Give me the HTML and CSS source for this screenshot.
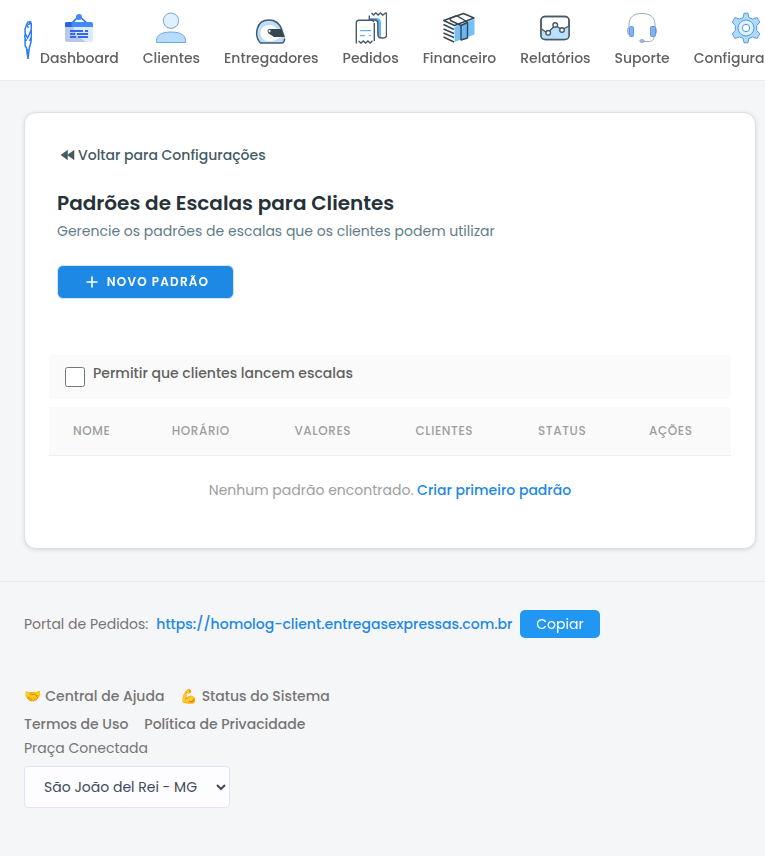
FILE: index.html
```html
<!DOCTYPE html>
<html lang="pt-BR">
<head>
    <meta charset="UTF-8">
    <meta name="viewport" content="width=device-width, initial-scale=1.0">
    <title>Padrões de Escalas para Clientes</title>
    <link rel="stylesheet" href="styles.css">
</head>
<body>
    <header class="topbar">
        <svg class="logo" viewBox="0 0 8 40" fill="none" stroke="#2f7bf6" stroke-width="1.500">
            <path d="M4.500 1.500L6.500 2 5 4 7.300 3.500V17L5.500 21M4 1.500L2.500 5 1 9l.2 5-.6 3L2.500 21M7 10l-2 5-1.500 3L1.500 14M1 19l.2 7 1.300 2 1.500 11 1.300-11L7 22l.3-5"/>
            <path d="M3 5l1.500 3M3.500 29v6"/>
        </svg>
        <nav class="menu">
            <a class="menu-item" href="#">
                <svg class="icon" viewBox="0 0 32 32">
                    <path d="M9 11l6-6h2l7 6" fill="none" stroke="#2962e8" stroke-width="1.600"/>
                    <circle cx="16" cy="5" r="3" fill="#3d8bfd"/>
                    <path d="M2 13h28v15a2 2 0 0 1-2 2H4a2 2 0 0 1-2-2z" fill="#e0eaff"/>
                    <path d="M2 13h8c1 7 5 12 13 17H4a2 2 0 0 1-2-2z" fill="#b8c8e6"/>
                    <path d="M4 10h24a2 2 0 0 1 2 2v3H2v-3a2 2 0 0 1 2-2z" fill="#3d8bfd"/>
                    <path d="M4 10h5l-.5 2 .5 3H2v-3a2 2 0 0 1 2-2z" fill="#2962e8"/>
                    <path d="M7 19h13M22 19h3M7 22h5M14 22h11M7 25h6M15 25h10" fill="none" stroke="#2f6bf0" stroke-width="2"/>
                </svg>
                <span>Dashboard</span>
            </a>
            <a class="menu-item" href="#">
                <svg class="icon" viewBox="0 0 32 32" stroke="#72a5d8" stroke-width="1">
                    <circle cx="16" cy="8.700" r="7.700" fill="#dff0fe"/>
                    <path d="M1.500 30.500v-2C1.500 23 7 20 16 20s14.500 3 14.500 8.500v2z" fill="#b6dcfe"/>
                </svg>
                <span>Clientes</span>
            </a>
            <a class="menu-item" href="#">
                <svg class="icon" viewBox="0 0 32 32">
                    <path d="M5 31C-1 23 1 8 14 8c8 0 12 4 14 10l2 8c0 3-1 5-3 5z" fill="#bbdefb"/>
                    <path d="M9 28C3 22 5 13 14 13c7 0 9 5 10 9l3 3c-5 3-13 6-18 3z" fill="#fff"/>
                    <path d="M5.500 31C-1 24 .5 8 14 8c7 0 10.500 4 12.500 9M5.500 31H26c2.500 0 3.500-1.500 3.500-4" fill="none" stroke="#455a64" stroke-width="1.500" stroke-linecap="round"/>
                    <path d="M15 17h12l3 8H19l-6-4c0-2 0-4 2-4z" fill="#37474f"/>
                    <circle cx="14.500" cy="19" r="1.600" fill="#fff" stroke="#455a64"/>
                </svg>
                <span>Entregadores</span>
            </a>
            <a class="menu-item" href="#">
                <svg class="icon" viewBox="0 0 32 32" fill="none" stroke="#455a64" stroke-width="1.400">
                    <path d="M15 6h6c4 0 5 2 5 6v13c-2 0-3-1-3-3V12c0-3-1-4-3-4h-5z" fill="#64b5f6" stroke="none"/>
                    <path d="M14.300 8V3.500M14.300 8H20c2 0 2.800 1 2.800 3.500V22c0 3 1 4 3.700 4h1.500c2.500 0 3.500-1 3.500-3V.5"/>
                    <path d="M16.500 1l2 2 2.300-2 2.300 2 2.300-2 2.300 2L31 .7"/>
                    <path d="M1.300 31.500V11c0-2 1-2.800 2.700-2.800h13.500L19 10M19.300 11v18"/>
                    <path d="M3.500 29l2.500 2 2.300-2 2.300 2 2.300-2 2.300 2 2.300-2.300"/>
                    <path d="M5 18.700h11M5 23.700h5M14 23.700h2" stroke="#64b5f6" stroke-width="1.300"/>
                </svg>
                <span>Pedidos</span>
            </a>
            <a class="menu-item" href="#">
                <svg class="icon" viewBox="0 0 32 32" fill="none" stroke="#37474f" stroke-width="1.400" stroke-linejoin="round">
                    <path d="M11.500 15L31.500 7v15.500l-20 7.500z" fill="#74c0fb" stroke="none"/>
                    <path d="M.7 8.500L20.500 1.500 31 6 11.500 13.500z" fill="#fff"/>
                    <path d="M18 13.500L7.500 8.500 7 6.300l6.500-2.600M13.500 3.700L24.500 10"/>
                    <path d="M18 13.500v14.500l6.500-2V10.500z" fill="#69b8f5"/>
                    <path d="M.5 12.500l10.500 5M.5 17l10.500 4.500M.5 21l10.500 4.500M.5 25l10.500 5"/>
                </svg>
                <span>Financeiro</span>
            </a>
            <a class="menu-item" href="#">
                <svg class="icon" viewBox="0 0 32 32" stroke="#455a64" stroke-width="1.400">
                    <rect x="2" y="4.500" width="28" height="23" rx="4" fill="#fff"/>
                    <path d="M2.500 17l6 4 8-8 6 5 7.500-4v10c0 2-2 3.500-4 3.500H6.500c-2 0-4-1.500-4-3.500z" fill="#bbe0fe" stroke="none"/>
                    <path d="M2.500 17l6 4 8-8 6 5 7.500-4" fill="none"/>
                    <rect x="2" y="4.500" width="28" height="23" rx="4" fill="none"/>
                    <g fill="#fff"><circle cx="9.200" cy="20.800" r="2.300"/><circle cx="16.200" cy="13" r="2.300"/><circle cx="23" cy="18" r="2.300"/></g>
                </svg>
                <span>Relatórios</span>
            </a>
            <a class="menu-item" href="#">
                <svg class="icon" viewBox="0 0 32 32" fill="none" stroke="#98a9be" stroke-width="1">
                    <path d="M3 15v-2C3 5 8 1.500 16 1.500S29 5 29 13v2M28 24c0 4-2 5.500-6 5.500h-5"/>
                    <path d="M3 15c-2 1-2 7 0 8M29 15c2 1 2 7 0 8" fill="#b6c9e0"/>
                    <rect x="3.500" y="14.500" width="4" height="10" rx="1" fill="#82b1f5" stroke="#6797dc"/>
                    <rect x="24.500" y="14.500" width="5" height="10" rx="1" fill="#82b1f5" stroke="#6797dc"/>
                    <ellipse cx="16" cy="29" rx="2.200" ry="1.500" fill="#a9bdd8"/>
                </svg>
                <span>Suporte</span>
            </a>
            <a class="menu-item" href="#">
                <svg class="icon" viewBox="0 0 32 32" stroke="#529be0" stroke-width="1" stroke-linejoin="round">
                    <path d="M14 1.200h4l.8 4.300 3.700 1.600 4.500-1.600 2.700 4.600-3 3.400v5l3 3.400-2.700 4.600-4.500-1.600-3.700 1.600-.8 4.300h-4l-.8-4.300-3.700-1.600L5 26.500l-2.700-4.600 3-3.400v-5l-3-3.400L5 5.500l4.500 1.600 3.700-1.600z" fill="#b0dbff"/>
                    <circle cx="16" cy="16" r="8" fill="#dff0fe"/>
                    <circle cx="16" cy="16" r="3.700" fill="#fff"/>
                </svg>
                <span>Configurações</span>
            </a>
        </nav>
    </header>

    <main class="card">
        <a class="back" href="#">
            <svg class="back-icon" viewBox="0 0 14 10"><path d="M7 0v10L0 5zM14 0v10L7 5z" fill="#455a64" stroke="#455a64" stroke-width=".6" stroke-linejoin="round"/></svg>
            <span>Voltar para Configurações</span>
        </a>
        <h1>Padrões de Escalas para Clientes</h1>
        <p class="subtitle">Gerencie os padrões de escalas que os clientes podem utilizar</p>
        <button class="btn-new">
            <svg class="plus" viewBox="0 0 12 12"><path d="M6 .5v11M.5 6h11" stroke="#fff" stroke-width="1.600"/></svg>
            <span>NOVO PADRÃO</span>
        </button>

        <label class="permission">
            <input type="checkbox">
            <span>Permitir que clientes lancem escalas</span>
        </label>

        <!-- Tabela de padrões -->
        <div class="table-head">
            <span>NOME</span>
            <span>HORÁRIO</span>
            <span>VALORES</span>
            <span>CLIENTES</span>
            <span>STATUS</span>
            <span>AÇÕES</span>
        </div>
        <p class="empty">Nenhum padrão encontrado. <a href="#">Criar primeiro padrão</a></p>
    </main>

    <footer class="footer">
        <div class="portal">
            <span>Portal de Pedidos:</span>
            <a class="portal-link" href="#">https://homolog-client.entregasexpressas.com.br</a>
            <button class="btn-copy">Copiar</button>
        </div>
        <div class="links">
            <a href="#"><span class="emoji">🤝</span>Central de Ajuda</a>
            <a href="#"><span class="emoji">💪</span>Status do Sistema</a>
        </div>
        <div class="links">
            <a href="#">Termos de Uso</a>
            <a href="#">Política de Privacidade</a>
        </div>
        <label class="praca-label" for="praca">Praça Conectada</label>
        <select id="praca" class="praca">
            <option>São João del Rei - MG</option>
        </select>
    </footer>
</body>
</html>
```

FILE: styles.css
```css
* {
    box-sizing: border-box;
}
body {
    margin: 0;
    height: 856px;
    overflow: hidden;
    background-color: #f5f6f8;
    font-family: Poppins, Inter, sans-serif;
    font-size: 14px;
    line-height: 20px;
    color: #757575;
}
a {
    color: inherit;
    text-decoration: none;
}
button, select {
    font-family: inherit;
    font-size: 14px;
}
/* Top menu */
.topbar {
    display: flex;
    height: 81px;
    padding-left: 24px;
    background-color: #fff;
    border-bottom: 1px solid #e9ebee;
    overflow: hidden;
}
.logo {
    flex: none;
    width: 8px;
    height: 40px;
    margin: 20px 8px 0 0;
}
.menu {
    display: flex;
    gap: 24px;
    padding-top: 12px;
    will-change: transform;
}
.menu-item {
    display: flex;
    flex: none;
    flex-direction: column;
    align-items: center;
    gap: 4px;
    font-weight: 500;
    color: #616161;
    white-space: nowrap;
}
.icon {
    width: 32px;
    height: 32px;
}
/* Card */
.card {
    width: 732px;
    height: 437px;
    margin: 31px 0 0 24px;
    padding: 32px 24px 0;
    background-color: #fff;
    border: 1px solid #dcdfe4;
    border-radius: 12px;
    box-shadow: 0 1px 4px rgba(0, 0, 0, 0.12);
}
.back {
    display: flex;
    align-items: center;
    gap: 4px;
    padding-left: 12px;
    font-weight: 500;
    color: #455a64;
}
.back-icon {
    width: 13px;
    height: 10px;
    overflow: visible;
}
h1 {
    margin: 24px 0 0 8px;
    font-size: 20px;
    line-height: 28px;
    font-weight: 600;
    color: #263238;
}
.subtitle {
    margin: 4px 0 0 8px;
    color: #607d8b;
}
.btn-new {
    display: flex;
    align-items: center;
    justify-content: center;
    gap: 9px;
    width: 177px;
    height: 34px;
    margin: 24px 0 0 8px;
    padding: 0 0 0 4px;
    font-size: 12px;
    font-weight: 600;
    letter-spacing: 1.200px;
    color: #fff;
    background-color: #1e88e5;
    border: 1px solid #d3e5f6;
    border-radius: 6px;
    will-change: transform;
}
.plus {
    width: 12px;
    height: 12px;
}
.permission {
    display: flex;
    gap: 8px;
    height: 44px;
    margin-top: 56px;
    padding: 8px 16px;
    font-weight: 500;
    color: #616161;
    background-color: #fafafa;
    border-radius: 4px;
}
.permission input {
    width: 20px;
    height: 20px;
    margin: 4px 0 0;
}
.table-head {
    display: grid;
    grid-template-columns: 98.700px 122.700px 121px 122.600px 111px 1fr;
    height: 49px;
    margin-top: 8px;
    padding-left: 24px;
    font-size: 12px;
    line-height: 48px;
    font-weight: 500;
    letter-spacing: 0.600px;
    color: #9e9e9e;
    background-color: #fafafa;
    border-bottom: 1px solid #eceef0;
}
.empty {
    margin: 24px 0 0;
    text-align: center;
    color: #9e9e9e;
}
.empty a {
    font-weight: 500;
    color: #1e88e5;
}
/* Footer */
.footer {
    margin-top: 32px;
    padding: 28px 24px 0;
    border-top: 1px solid #e9ebee;
}
.portal {
    display: flex;
    align-items: center;
    gap: 8px;
    margin-bottom: 44px;
}
.portal-link {
    font-weight: 500;
    color: #1e88e5;
}
.btn-copy {
    width: 80px;
    height: 28px;
    padding: 0;
    color: #fff;
    background-color: #2196f3;
    border: 0;
    border-radius: 5px;
    will-change: transform;
}
.links {
    display: flex;
    gap: 16px;
    height: 28px;
    line-height: 28px;
    font-weight: 500;
}
.emoji {
    margin-right: 4.200px;
}
.praca-label {
    display: block;
}
.praca {
    display: block;
    width: 206px;
    height: 42px;
    margin-top: 8px;
    padding: 0 0 0 15px;
    color: #424a57;
    background-color: #fdfdff;
    border: 1px solid #e0e3fb;
    border-radius: 4px;
}
```
